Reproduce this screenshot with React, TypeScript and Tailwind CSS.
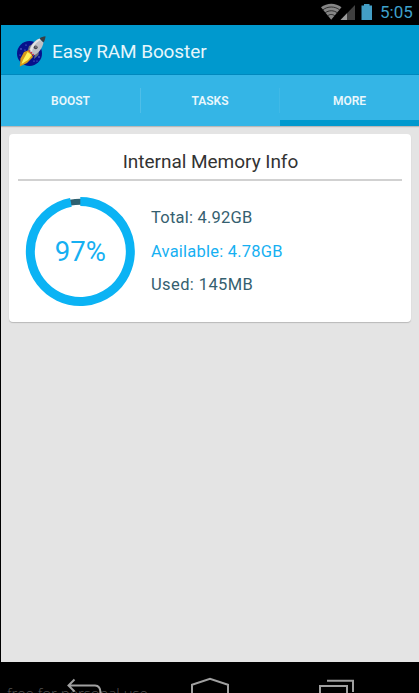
function StatusBar() {
  return (
    <div className="flex h-[25px] shrink-0 items-center justify-end bg-black pr-[7px]">
      <svg className="h-[25px] w-[56px]" viewBox="318 0 56 25">
        <path d="M321 7.3C327 2.5 335.500 2.500 341.500 7.300L331.200 19.800Z" fill="#858585" />
        <path d="M322.700 10C327.500 6 335 6 339.800 10M325 13C328.500 10 334 10 337.500 13M327.500 16C329.700 14 332.700 14 335 16" fill="none" stroke="#181818" strokeWidth=".8" />
        <path d="M355 5V20H340.500Z" fill="#404040" />
        <path d="M347 13.200V20H340.500Z" fill="#9b9b9b" />
        <path d="M364 4h5.500v1.500h2.500V20h-10.500V5.500H364Z" fill="#439ec5" />
      </svg>
      <span className="ml-[6px] w-[32px] text-[17px] leading-[25px] text-[#3fa1cb]">5:05</span>
    </div>
  );
}

function Rocket() {
  return (
    <svg className="h-[34px] w-[32px] shrink-0" viewBox="15 33 32 34">
      <circle cx="29.500" cy="53.500" r="12.500" fill="#07118b" />
      <g fill="#8393ef">
        <circle cx="21" cy="49" r=".7" /><circle cx="26" cy="45" r=".6" /><circle cx="39" cy="57" r=".7" />
        <circle cx="34" cy="61" r=".6" /><circle cx="20" cy="55" r=".6" /><circle cx="37" cy="61" r=".5" /><circle cx="25" cy="50" r=".6" />
      </g>
      <path d="M29 50L24 52L20.500 58.500L19.800 66.500L27 63L33 57Z" fill="#d79a18" />
      <path d="M27.500 52L23 60L21.500 64L28 60L32 55Z" fill="#fff25a" />
      <path d="M33 44L29 46L27.500 51L31 49ZM39 50L38.500 55L34 59L35 54Z" fill="#6c707c" />
      <path d="M39.500 38.500C33.500 41 30 46 29 51L33.500 55.500C39 53 42.500 48 43.500 42.500Z" fill="#bfc0c6" />
      <path d="M39.500 38.500C35 41 32 44 30 50L32 52C33 46 36 42 41 40Z" fill="#e5e5e5" />
      <path d="M39.500 38.500C41 37 43.500 36.500 45.500 36.200C45.400 38.800 44.500 41 43.500 42.500Z" fill="#383e45" />
      <circle cx="35.700" cy="47.300" r="1.900" fill="#45464e" />
      <circle cx="36" cy="47" r=".7" fill="#aaa" />
      <path d="M29 50.500L34 55.500" stroke="#d72a34" strokeWidth="1.500" strokeDasharray="1.500 1" />
    </svg>
  );
}

function Tabs() {
  return (
    <div className="relative z-10 grid h-[51px] shrink-0 grid-cols-[140px_139px_139px] bg-[#34b5e6] text-center text-[12px] leading-[53px] font-semibold text-[#eaf7fc] shadow-[0_1px_1px_#00000030]">
      <div className="bg-[linear-gradient(#4fbee8,#4fbee8)] bg-[length:1px_25px] bg-[position:100%_13px] bg-no-repeat pr-px">BOOST</div>
      <div className="bg-[linear-gradient(#40b9e7,#40b9e7)] bg-[length:1px_25px] bg-[position:100%_13px] bg-no-repeat pr-px">TASKS</div>
      <div className="h-[51px] border-b-[6px] border-[#0099ce]">MORE</div>
    </div>
  );
}

function MemoryCard() {
  return (
    <section className="mx-2 mt-[8px] h-[188px] rounded-[4px] bg-white px-[9px] shadow-[0_1px_1px_#b9b9b9]">
      <h2 className="h-[47px] border-b-2 border-[#d1d1d1] pt-[5px] pl-px text-center text-[19px] leading-[45px] text-[#333333]">
        <span className="tracking-[-0.03px]">Internal Memory Info</span>
      </h2>
      <div className="flex pt-[14px] pl-[6px]">
        <svg className="h-[112px] w-[112px]" viewBox="0 0 112 112">
          <circle cx="56.300" cy="56.500" r="49.800" fill="none" stroke="#2e6070" strokeWidth="6" />
          <path d="M56.300 6.500A50 50 0 1 1 46.900 7.400" fill="none" stroke="#0bb3f4" strokeWidth="9" />
          <text x="56.300" y="66" textAnchor="middle" fontSize="27.500" fill="#16b0f2">97%</text>
        </svg>
        <div className="pt-[6px] pl-[15px] text-[16.500px] leading-[33.500px] tracking-[0.22px] text-[#355f70]">
          <p>Total: 4.92GB</p>
          <p className="text-[#16b0f2]">Available: 4.78GB</p>
          <p className="tracking-[0.4px]">Used: 145MB</p>
        </div>
      </div>
    </section>
  );
}

function NavigationBar() {
  return (
    <div className="relative h-[31px] shrink-0 overflow-hidden bg-black">
      <span className="absolute top-[20px] left-[7px] font-['Open_Sans',sans-serif] text-[15px] leading-[23px] font-light whitespace-nowrap text-[#555555]">free for personal use</span>
      <svg className="absolute inset-0 h-[31px] w-[419px]" viewBox="0 662 419 31" fill="none" stroke="#a0a0a0" strokeWidth="2">
        <path d="M74.500 679.500L68.500 685.500L74.500 691.500M69 685.500H95Q100.500 685.500 100.500 693" />
        <path d="M192 694V684.700L210 678.700L228 684.700V694" />
        <path d="M327 680.800H353V692M320 694V686H347V694" />
      </svg>
    </div>
  );
}

export default function App() {
  return (
    <main className="flex h-[693px] w-[419px] flex-col overflow-hidden bg-black font-[Roboto,sans-serif]">
      <StatusBar />
      <div className="ml-px flex min-h-0 flex-1 flex-col bg-[#e4e4e4]">
        <header className="flex h-[50px] shrink-0 items-center border-b border-[#0088bd] bg-[#0099ce] pl-[14px]">
          <Rocket />
          <h1 className="ml-[5px] pt-[3px] text-[19px] leading-[47px] tracking-[-0.1px] text-[#e6f6fc]">Easy RAM Booster</h1>
        </header>
        <Tabs />
        <MemoryCard />
      </div>
      <NavigationBar />
    </main>
  );
}
